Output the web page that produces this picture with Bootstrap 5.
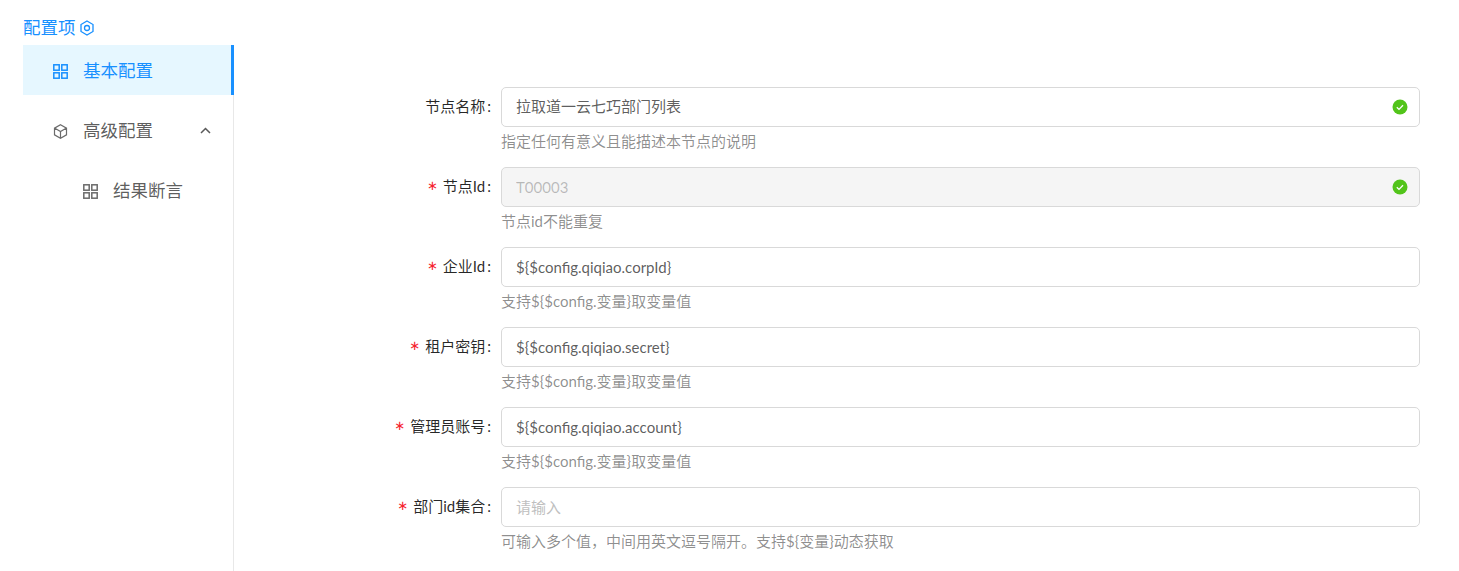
<!doctype html>
<html lang="zh-CN">
<head>
<meta charset="UTF-8">
<meta name="viewport" content="width=device-width, initial-scale=1">
<title>配置项</title>
<link href="https://cdn.jsdelivr.net/npm/bootstrap@5.3.3/dist/css/bootstrap.min.css" rel="stylesheet">
<style>
body {
    font-family: Lato, "Noto Sans CJK SC", sans-serif;
    font-size: 15px;
    color: rgba(0,0,0,.65);
    height: 571px;
    overflow: hidden;
}
.page-wrap { padding: 16px 0 0 23px; }
.side-title { color: #1890ff; font-size: 17.5px; line-height: 22px; height: 29px; padding-top: 1px; }
.title-icon { margin-top: 3px; margin-left: 2px; }
.side-col { width: 211px; height: 526px; border-right: 1px solid #e8e8e8; flex: none; }
.side-item { height: 50px; font-size: 17.5px; margin-bottom: 10px; padding: 2px 0 0 30px; margin-right: -1px; gap: 15px; }
.side-item.on { background: #e6f7ff; color: #1890ff; border-right: 3px solid #1890ff; }
.side-item.sub { padding-left: 60px; }
.side-arrow { margin: -2px 0 0 32px; }
.form-col { padding-top: 42px; }
.form-line { height: 80px; }
.lbl { width: 267px; height: 40px; flex: none; color: rgba(0,0,0,.85); padding-bottom: 2px; }
.lbl-colon { margin: 0 10px 0 2px; }
.req { color: #f5222d; font-family: "DejaVu Sans", sans-serif; margin-right: 5px; font-size: 13px; }
.input-area { width: 919px; flex: none; }
.form-control.inp {
    height: 40px;
    border: 1px solid #d9d9d9;
    border-radius: 5px;
    padding: 4px 14px;
    font-size: 15px;
    color: rgba(0,0,0,.65);
}
.form-control.inp.cjk-val { padding-bottom: 6px; padding-top: 3px; }
.form-control.inp::placeholder { color: #bfbfbf; }
.form-control.inp:disabled { background: #f5f5f5; color: rgba(0,0,0,.25); }
.ok-icon { position: absolute; top: 12px; right: 12px; }
.hint { color: rgba(0,0,0,.45); line-height: 22px; margin-top: 3px; }
</style>
</head>
<body>
<div class="page-wrap">
    <div class="side-title d-flex align-items-start">
        <span>配置项</span>
        <svg class="title-icon ms-1" width="14" height="16" viewBox="0 0 14 16" fill="none" stroke="#1890ff" stroke-width="1.300"><path d="M7 1l6 3.500v7L7 15l-6-3.500v-7z"/><circle cx="7" cy="8" r="2.500"/></svg>
    </div>
    <div class="d-flex">
        <div class="side-col">
            <div class="side-item on d-flex align-items-center">
                <svg width="15" height="15" viewBox="0 0 15 15" fill="none" stroke="#1890ff" stroke-width="1.500"><rect x=".8" y=".8" width="5.400" height="5.400"/><rect x="8.800" y=".8" width="5.400" height="5.400"/><rect x=".8" y="8.800" width="5.400" height="5.400"/><rect x="8.800" y="8.800" width="5.400" height="5.400"/></svg>
                <span>基本配置</span>
            </div>
            <div class="side-item d-flex align-items-center">
                <svg width="15" height="15" viewBox="0 0 15 15" fill="none" stroke="#6b6b6b" stroke-width="1.200"><path d="M7.500 .8l6 3.300v6.800l-6 3.300-6-3.300V4.100zM1.500 4.100l6 3.400 6-3.400M7.500 7.500v6.700"/></svg>
                <span>高级配置</span>
                <svg class="side-arrow" width="11" height="7" viewBox="0 0 11 7" fill="none" stroke="#595959" stroke-width="1.500"><path d="M1 6l4.500-4.500L10 6"/></svg>
            </div>
            <div class="side-item sub d-flex align-items-center">
                <svg width="15" height="15" viewBox="0 0 15 15" fill="none" stroke="#6b6b6b" stroke-width="1.500"><rect x=".8" y=".8" width="5.400" height="5.400"/><rect x="8.800" y=".8" width="5.400" height="5.400"/><rect x=".8" y="8.800" width="5.400" height="5.400"/><rect x="8.800" y="8.800" width="5.400" height="5.400"/></svg>
                <span>结果断言</span>
            </div>
        </div>
        <div class="form-col">
            <div class="form-line d-flex">
                <div class="lbl d-flex align-items-center justify-content-end"><span>节点名称</span><span class="lbl-colon">:</span></div>
                <div class="input-area">
                    <div class="position-relative">
                        <input class="form-control inp cjk-val" value="拉取道一云七巧部门列表">
                        <svg class="ok-icon" width="16" height="16" viewBox="0 0 16 16"><circle cx="8" cy="8" r="7.500" fill="#52c41a"/><path d="M4.800 8.200l2.200 2.200 4-4.200" fill="none" stroke="#fff" stroke-width="1.300"/></svg>
                    </div>
                    <div class="hint">指定任何有意义且能描述本节点的说明</div>
                </div>
            </div>
            <div class="form-line d-flex">
                <div class="lbl d-flex align-items-center justify-content-end"><span class="req">∗</span><span>节点Id</span><span class="lbl-colon">:</span></div>
                <div class="input-area">
                    <div class="position-relative">
                        <input class="form-control inp" value="T00003" disabled>
                        <svg class="ok-icon" width="16" height="16" viewBox="0 0 16 16"><circle cx="8" cy="8" r="7.500" fill="#52c41a"/><path d="M4.800 8.200l2.200 2.200 4-4.200" fill="none" stroke="#fff" stroke-width="1.300"/></svg>
                    </div>
                    <div class="hint">节点id不能重复</div>
                </div>
            </div>
            <div class="form-line d-flex">
                <div class="lbl d-flex align-items-center justify-content-end"><span class="req">∗</span><span>企业Id</span><span class="lbl-colon">:</span></div>
                <div class="input-area">
                    <input class="form-control inp" value="${$config.qiqiao.corpId}">
                    <div class="hint">支持${$config.变量}取变量值</div>
                </div>
            </div>
            <div class="form-line d-flex">
                <div class="lbl d-flex align-items-center justify-content-end"><span class="req">∗</span><span>租户密钥</span><span class="lbl-colon">:</span></div>
                <div class="input-area">
                    <input class="form-control inp" value="${$config.qiqiao.secret}">
                    <div class="hint">支持${$config.变量}取变量值</div>
                </div>
            </div>
            <div class="form-line d-flex">
                <div class="lbl d-flex align-items-center justify-content-end"><span class="req">∗</span><span>管理员账号</span><span class="lbl-colon">:</span></div>
                <div class="input-area">
                    <input class="form-control inp" value="${$config.qiqiao.account}">
                    <div class="hint">支持${$config.变量}取变量值</div>
                </div>
            </div>
            <div class="form-line d-flex">
                <div class="lbl d-flex align-items-center justify-content-end"><span class="req">∗</span><span>部门id集合</span><span class="lbl-colon">:</span></div>
                <div class="input-area">
                    <input class="form-control inp" placeholder="请输入">
                    <div class="hint">可输入多个值，中间用英文逗号隔开。支持${变量}动态获取</div>
                </div>
            </div>
        </div>
    </div>
</div>
</body>
</html>
